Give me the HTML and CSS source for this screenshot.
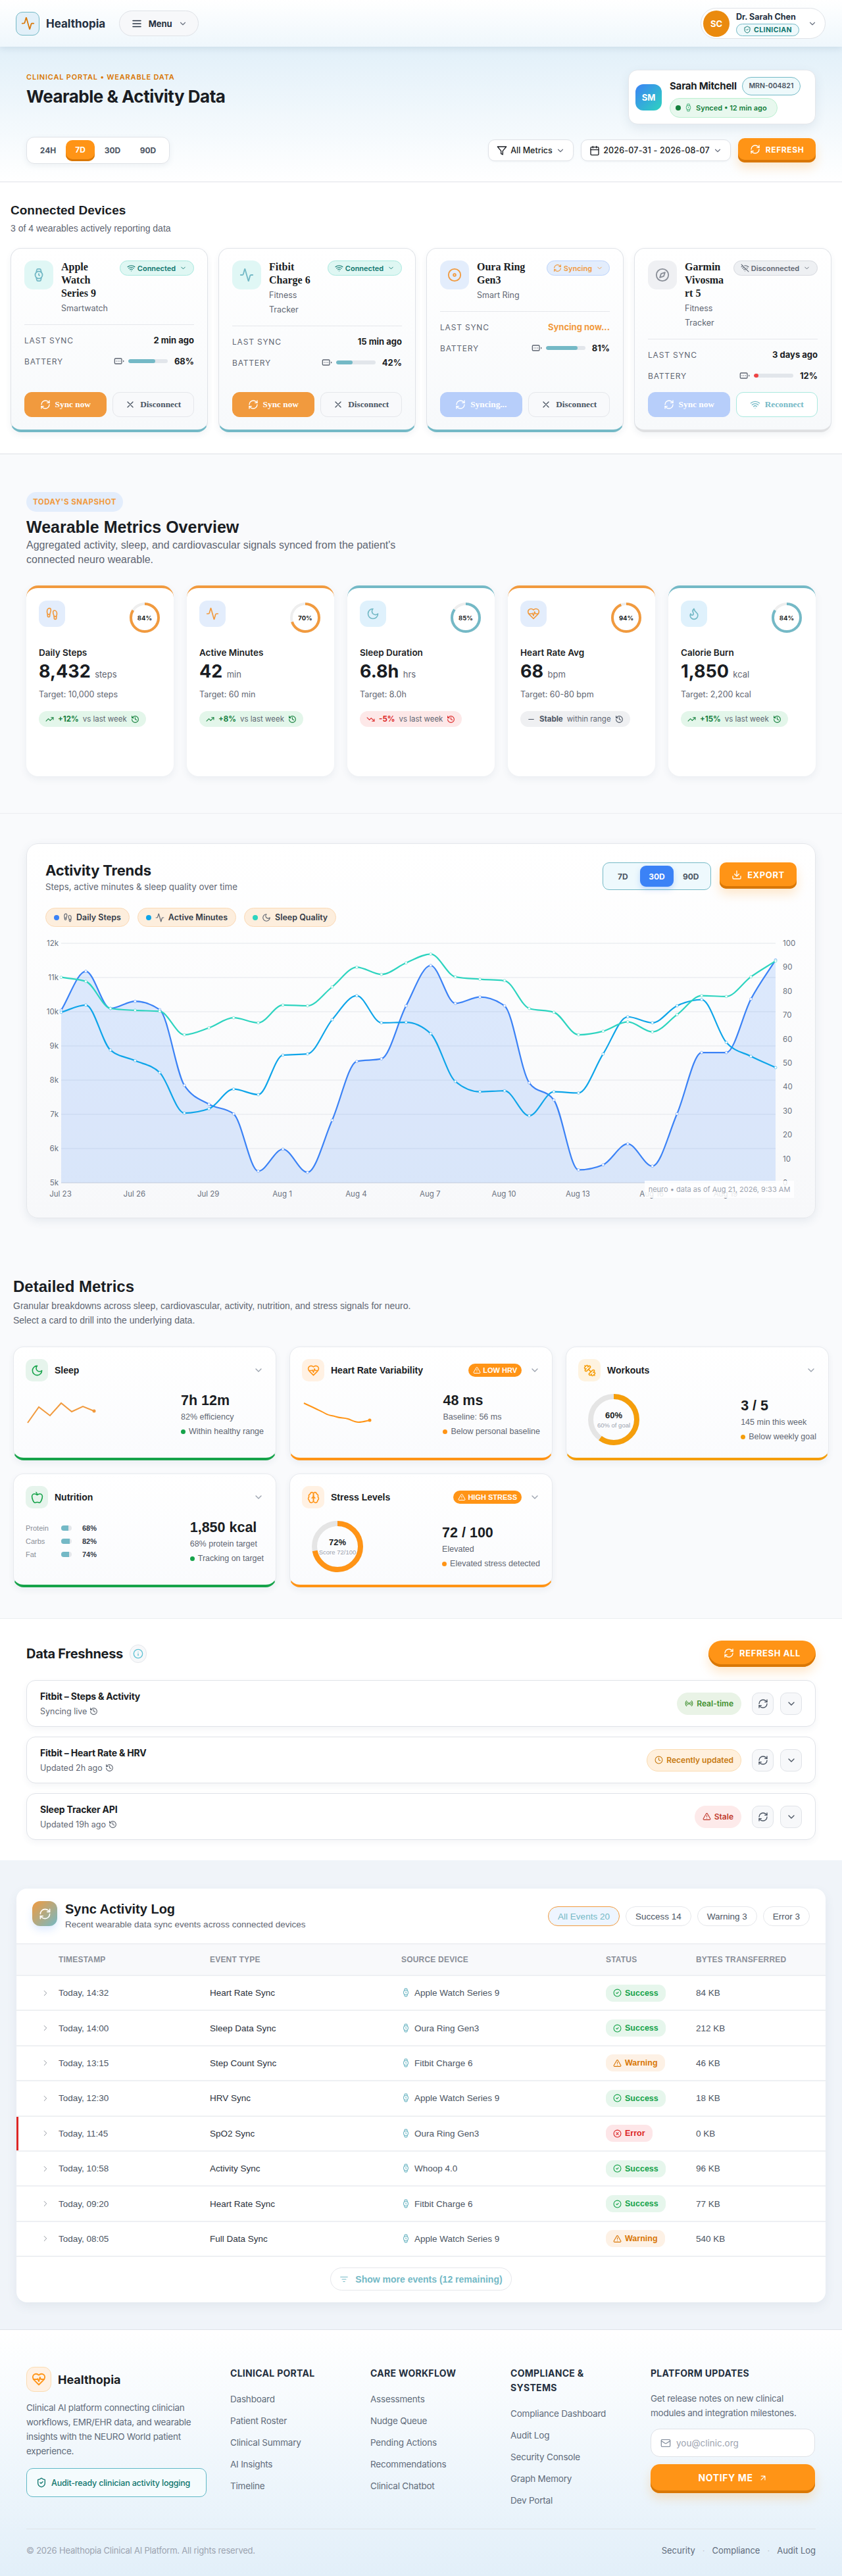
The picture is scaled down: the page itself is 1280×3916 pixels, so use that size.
FILE: index.html
```html
<!DOCTYPE html>
<html lang="en">
<head>
    <meta charset="UTF-8">
    <meta name="viewport" content="width=device-width, initial-scale=1.0">
    <title>Wearable &amp; Activity Data - Healthopia</title>
    <link rel="stylesheet" href="styles.css">
</head>
<body>
    <!-- icon sprite -->
    <svg class="sprite" xmlns="http://www.w3.org/2000/svg">
        <symbol id="i-activity" viewBox="0 0 24 24"><path d="M22 12h-2.48a2 2 0 0 0-1.93 1.46l-2.35 8.36a.25.25 0 0 1-.48 0L9.24 2.18a.25.25 0 0 0-.48 0l-2.35 8.36A2 2 0 0 1 4.49 12H2"/></symbol>
        <symbol id="i-menu" viewBox="0 0 24 24"><path d="M4 6h16M4 12h16M4 18h16"/></symbol>
        <symbol id="i-down" viewBox="0 0 24 24"><path d="m6 9 6 6 6-6"/></symbol>
        <symbol id="i-right" viewBox="0 0 24 24"><path d="m9 18 6-6-6-6"/></symbol>
        <symbol id="i-refresh" viewBox="0 0 24 24"><path d="M3 12a9 9 0 0 1 9-9 9.75 9.75 0 0 1 6.74 2.74L21 8"/><path d="M21 3v5h-5"/><path d="M21 12a9 9 0 0 1-9 9 9.75 9.75 0 0 1-6.74-2.74L3 16"/><path d="M8 16H3v5"/></symbol>
        <symbol id="i-shield" viewBox="0 0 24 24"><path d="M20 13c0 5-3.5 7.5-7.66 8.95a1 1 0 0 1-.67-.01C7.5 20.5 4 18 4 13V6a1 1 0 0 1 1-1c2 0 4.5-1.2 6.24-2.72a1.17 1.17 0 0 1 1.52 0C14.51 3.81 17 5 19 5a1 1 0 0 1 1 1z"/><path d="m9 12 2 2 4-4"/></symbol>
        <symbol id="i-watch" viewBox="0 0 24 24"><circle cx="12" cy="12" r="6"/><path d="M12 10v2l1 1"/><path d="m16.13 7.66-.81-4.05a2 2 0 0 0-2-1.61h-2.68a2 2 0 0 0-2 1.61l-.78 4.05"/><path d="m7.88 16.36.8 4a2 2 0 0 0 2 1.61h2.72a2 2 0 0 0 2-1.61l.81-4.05"/></symbol>
        <symbol id="i-filter" viewBox="0 0 24 24"><path d="M22 3H2l8 9.46V19l4 2v-8.54z"/></symbol>
        <symbol id="i-calendar" viewBox="0 0 24 24"><rect x="3" y="4" width="18" height="18" rx="2"/><path d="M16 2v4M8 2v4M3 10h18"/></symbol>
        <symbol id="i-wifi" viewBox="0 0 24 24"><path d="M12 20h.01"/><path d="M2 8.82a15 15 0 0 1 20 0"/><path d="M5 12.86a10 10 0 0 1 14 0"/><path d="M8.5 16.43a5 5 0 0 1 7 0"/></symbol>
        <symbol id="i-wifi-off" viewBox="0 0 24 24"><path d="M12 20h.01"/><path d="M8.5 16.43a5 5 0 0 1 7 0"/><path d="M5 12.86a10 10 0 0 1 5-2.69"/><path d="M2 8.82a15 15 0 0 1 4.18-2.65"/><path d="M19 12.86a10 10 0 0 0-2.01-1.5"/><path d="M22 8.82a15 15 0 0 0-11.29-3.76"/><path d="m2 2 20 20"/></symbol>
        <symbol id="i-x" viewBox="0 0 24 24"><path d="M18 6 6 18M6 6l12 12"/></symbol>
        <symbol id="i-battery" viewBox="0 0 24 24"><rect x="2" y="6" width="16" height="12" rx="2"/><path d="M22 11v2M6 12h.01M10 12h.01M14 12h.01"/></symbol>
        <symbol id="i-ring" viewBox="0 0 24 24"><circle cx="12" cy="12" r="10"/><circle cx="12" cy="12" r="2"/></symbol>
        <symbol id="i-compass" viewBox="0 0 24 24"><circle cx="12" cy="12" r="10"/><path d="m16.24 7.76-2.12 6.36-6.36 2.12 2.12-6.36z"/></symbol>
        <symbol id="i-steps" viewBox="0 0 24 24"><path d="M4 16v-2.38C4 11.5 2.97 10.5 3 8c.03-2.72 1.49-6 4.5-6C9.37 2 10 3.8 10 5.5c0 3.11-2 5.66-2 8.68V16a2 2 0 1 1-4 0Z"/><path d="M20 20v-2.38c0-2.12 1.03-3.12 1-5.62-.03-2.72-1.49-6-4.5-6C14.63 6 14 7.8 14 9.5c0 3.11 2 5.66 2 8.68V20a2 2 0 1 0 4 0Z"/><path d="M16 17h4M4 13h4"/></symbol>
        <symbol id="i-moon" viewBox="0 0 24 24"><path d="M12 3a6 6 0 0 0 9 9 9 9 0 1 1-9-9Z"/></symbol>
        <symbol id="i-heart" viewBox="0 0 24 24"><path d="M19 14c1.49-1.46 3-3.21 3-5.5A5.5 5.5 0 0 0 16.5 3c-1.76 0-3 .5-4.5 2-1.5-1.5-2.74-2-4.5-2A5.5 5.5 0 0 0 2 8.5c0 2.3 1.5 4.05 3 5.5l7 7Z"/><path d="M3.22 12H9.5l.5-1 2 4.5 2-7 1.5 3.5h5.27"/></symbol>
        <symbol id="i-flame" viewBox="0 0 24 24"><path d="M8.5 14.5A2.5 2.5 0 0 0 11 12c0-1.38-.5-2-1-3-1.07-2.14-.22-4.05 2-6 .5 2.5 2 4.9 4 6.5 2 1.6 3 3.5 3 5.5a7 7 0 1 1-14 0c0-1.15.43-2.29 1-3a2.5 2.5 0 0 0 2.5 2.5z"/></symbol>
        <symbol id="i-up" viewBox="0 0 24 24"><path d="M22 7l-8.5 8.5-5-5L2 17"/><path d="M16 7h6v6"/></symbol>
        <symbol id="i-drop" viewBox="0 0 24 24"><path d="M22 17l-8.5-8.5-5 5L2 7"/><path d="M16 17h6v-6"/></symbol>
        <symbol id="i-minus" viewBox="0 0 24 24"><path d="M5 12h14"/></symbol>
        <symbol id="i-history" viewBox="0 0 24 24"><path d="M3 12a9 9 0 1 0 9-9 9.75 9.75 0 0 0-6.74 2.74L3 8"/><path d="M3 3v5h5"/><path d="M12 7v5l4 2"/></symbol>
        <symbol id="i-download" viewBox="0 0 24 24"><path d="M21 15v4a2 2 0 0 1-2 2H5a2 2 0 0 1-2-2v-4"/><path d="m7 10 5 5 5-5"/><path d="M12 15V3"/></symbol>
        <symbol id="i-dumbbell" viewBox="0 0 24 24"><path d="M14.4 14.4 9.6 9.6"/><path d="M18.66 21.49a2 2 0 1 1-2.83-2.83l-1.77 1.77a2 2 0 1 1-2.83-2.83l6.36-6.36a2 2 0 1 1 2.83 2.83l-1.77 1.77a2 2 0 1 1 2.83 2.83z"/><path d="m21.5 21.5-1.4-1.4M3.9 3.9 2.5 2.5"/><path d="M6.4 12.77a2 2 0 1 1-2.83-2.83l1.77-1.77a2 2 0 1 1-2.83-2.83l2.83-2.83a2 2 0 1 1 2.83 2.83l1.77-1.77a2 2 0 1 1 2.83 2.83z"/></symbol>
        <symbol id="i-apple" viewBox="0 0 24 24"><path d="M12 20.94c1.5 0 2.75 1.06 4 1.06 3 0 6-8 6-12.22A4.91 4.91 0 0 0 17 5c-2.22 0-4 1.44-5 2-1-.56-2.78-2-5-2a4.9 4.9 0 0 0-5 4.78C2 14 5 22 8 22c1.25 0 2.5-1.06 4-1.06Z"/><path d="M10 2c1 .5 2 2 2 5"/></symbol>
        <symbol id="i-brain" viewBox="0 0 24 24"><path d="M12 5a3 3 0 1 0-6 .13 4 4 0 0 0-2.52 5.77 4 4 0 0 0 .55 6.58A4 4 0 1 0 12 18Z"/><path d="M12 5a3 3 0 1 1 6 .13 4 4 0 0 1 2.52 5.77 4 4 0 0 1-.55 6.58A4 4 0 1 1 12 18Z"/><path d="M15 13a4.5 4.5 0 0 1-3-4 4.5 4.5 0 0 1-3 4"/></symbol>
        <symbol id="i-alert" viewBox="0 0 24 24"><path d="m21.73 18-8-14a2 2 0 0 0-3.48 0l-8 14A2 2 0 0 0 4 21h16a2 2 0 0 0 1.73-3"/><path d="M12 9v4M12 17h.01"/></symbol>
        <symbol id="i-clock" viewBox="0 0 24 24"><circle cx="12" cy="12" r="10"/><path d="M12 6v6l4 2"/></symbol>
        <symbol id="i-info" viewBox="0 0 24 24"><circle cx="12" cy="12" r="10"/><path d="M12 16v-4M12 8h.01"/></symbol>
        <symbol id="i-radio" viewBox="0 0 24 24"><path d="M4.9 19.1C1 15.2 1 8.8 4.9 4.9"/><path d="M7.8 16.2c-2.3-2.3-2.3-6.1 0-8.5"/><circle cx="12" cy="12" r="2"/><path d="M16.2 7.8c2.3 2.3 2.3 6.1 0 8.5"/><path d="M19.1 4.9C23 8.8 23 15.1 19.1 19"/></symbol>
        <symbol id="i-check" viewBox="0 0 24 24"><circle cx="12" cy="12" r="10"/><path d="m9 12 2 2 4-4"/></symbol>
        <symbol id="i-error" viewBox="0 0 24 24"><circle cx="12" cy="12" r="10"/><path d="m15 9-6 6M9 9l6 6"/></symbol>
        <symbol id="i-list" viewBox="0 0 24 24"><path d="M3 6h18M7 12h10M10 18h4"/></symbol>
        <symbol id="i-mail" viewBox="0 0 24 24"><rect x="2" y="4" width="20" height="16" rx="2"/><path d="m22 7-8.97 5.7a1.94 1.94 0 0 1-2.06 0L2 7"/></symbol>
        <symbol id="i-arrow" viewBox="0 0 24 24"><path d="M7 7h10v10M7 17 17 7"/></symbol>
    </svg>

    <header class="topbar">
        <div class="topbar-left">
            <div class="logo-box"><svg class="ic"><use href="#i-activity"/></svg></div>
            <span class="logo-name">Healthopia</span>
            <button class="menu-btn"><svg class="ic"><use href="#i-menu"/></svg><span>Menu</span><svg class="ic ic-chev"><use href="#i-down"/></svg></button>
        </div>
        <div class="user-pill">
            <div class="user-avatar">SC</div>
            <div class="user-info">
                <div class="user-name">Dr. Sarah Chen</div>
                <div class="role-badge"><svg class="ic"><use href="#i-shield"/></svg>CLINICIAN</div>
            </div>
            <svg class="ic ic-chev"><use href="#i-down"/></svg>
        </div>
    </header>

    <section class="page-head">
        <div class="page-head-top">
            <div class="page-title">
                <div class="eyebrow">CLINICAL PORTAL • WEARABLE DATA</div>
                <h1>Wearable &amp; Activity Data</h1>
            </div>
            <div class="patient-card">
                <div class="patient-avatar">SM</div>
                <div>
                    <div class="patient-line">
                        <span class="patient-name">Sarah Mitchell</span>
                        <span class="mrn">MRN-004821</span>
                    </div>
                    <div class="synced-pill"><i class="dot"></i><svg class="ic"><use href="#i-watch"/></svg>Synced • 12 min ago</div>
                </div>
            </div>
        </div>
        <div class="controls">
            <div class="time-tabs">
                <button>24H</button>
                <button class="active">7D</button>
                <button>30D</button>
                <button>90D</button>
            </div>
            <div class="controls-right">
                <button class="select-btn select-metrics"><svg class="ic"><use href="#i-filter"/></svg>All Metrics<svg class="ic ic-chev"><use href="#i-down"/></svg></button>
                <button class="select-btn select-date"><svg class="ic"><use href="#i-calendar"/></svg>2026-07-31 - 2026-08-07<svg class="ic ic-chev"><use href="#i-down"/></svg></button>
                <button class="orange-btn refresh-btn"><svg class="ic"><use href="#i-refresh"/></svg>REFRESH</button>
            </div>
        </div>
    </section>

    <section class="devices">
        <h2>Connected Devices</h2>
        <p class="devices-sub">3 of 4 wearables actively reporting data</p>
        <div class="device-grid">
            <div class="device-card">
                <div class="device-head">
                    <div class="device-icon teal"><svg class="ic"><use href="#i-watch"/></svg></div>
                    <div class="device-name">
                        <h3>Apple Watch Series 9</h3>
                        <p>Smartwatch</p>
                    </div>
                    <span class="conn connected"><svg class="ic"><use href="#i-wifi"/></svg>Connected<svg class="ic ic-small"><use href="#i-down"/></svg></span>
                </div>
                <div class="device-row"><span class="row-label">LAST SYNC</span><b>2 min ago</b></div>
                <div class="device-row"><span class="row-label">BATTERY</span><span class="battery"><svg class="ic"><use href="#i-battery"/></svg><span class="track"><i style="width:68%"></i></span><b>68%</b></span></div>
                <div class="device-actions">
                    <button class="dev-btn primary"><svg class="ic"><use href="#i-refresh"/></svg>Sync now</button>
                    <button class="dev-btn"><svg class="ic"><use href="#i-x"/></svg>Disconnect</button>
                </div>
            </div>
            <div class="device-card">
                <div class="device-head">
                    <div class="device-icon teal"><svg class="ic"><use href="#i-activity"/></svg></div>
                    <div class="device-name">
                        <h3>Fitbit Charge 6</h3>
                        <p>Fitness Tracker</p>
                    </div>
                    <span class="conn connected"><svg class="ic"><use href="#i-wifi"/></svg>Connected<svg class="ic ic-small"><use href="#i-down"/></svg></span>
                </div>
                <div class="device-row"><span class="row-label">LAST SYNC</span><b>15 min ago</b></div>
                <div class="device-row"><span class="row-label">BATTERY</span><span class="battery"><svg class="ic"><use href="#i-battery"/></svg><span class="track"><i style="width:42%"></i></span><b>42%</b></span></div>
                <div class="device-actions">
                    <button class="dev-btn primary"><svg class="ic"><use href="#i-refresh"/></svg>Sync now</button>
                    <button class="dev-btn"><svg class="ic"><use href="#i-x"/></svg>Disconnect</button>
                </div>
            </div>
            <div class="device-card">
                <div class="device-head">
                    <div class="device-icon blue"><svg class="ic"><use href="#i-ring"/></svg></div>
                    <div class="device-name">
                        <h3>Oura Ring Gen3</h3>
                        <p>Smart Ring</p>
                    </div>
                    <span class="conn syncing"><svg class="ic"><use href="#i-refresh"/></svg>Syncing<svg class="ic ic-small"><use href="#i-down"/></svg></span>
                </div>
                <div class="device-row"><span class="row-label">LAST SYNC</span><b class="now">Syncing now...</b></div>
                <div class="device-row"><span class="row-label">BATTERY</span><span class="battery"><svg class="ic"><use href="#i-battery"/></svg><span class="track"><i style="width:81%"></i></span><b>81%</b></span></div>
                <div class="device-actions">
                    <button class="dev-btn faded"><svg class="ic"><use href="#i-refresh"/></svg>Syncing...</button>
                    <button class="dev-btn"><svg class="ic"><use href="#i-x"/></svg>Disconnect</button>
                </div>
            </div>
            <div class="device-card off">
                <div class="device-head">
                    <div class="device-icon grey"><svg class="ic"><use href="#i-compass"/></svg></div>
                    <div class="device-name">
                        <h3>Garmin Vivosmart 5</h3>
                        <p>Fitness Tracker</p>
                    </div>
                    <span class="conn disconnected"><svg class="ic"><use href="#i-wifi-off"/></svg>Disconnected<svg class="ic ic-small"><use href="#i-down"/></svg></span>
                </div>
                <div class="device-row"><span class="row-label">LAST SYNC</span><b>3 days ago</b></div>
                <div class="device-row"><span class="row-label">BATTERY</span><span class="battery"><svg class="ic"><use href="#i-battery"/></svg><span class="track"><i class="low" style="width:12%"></i></span><b>12%</b></span></div>
                <div class="device-actions">
                    <button class="dev-btn faded"><svg class="ic"><use href="#i-refresh"/></svg>Sync now</button>
                    <button class="dev-btn reconnect"><svg class="ic"><use href="#i-wifi"/></svg>Reconnect</button>
                </div>
            </div>
        </div>
    </section>

    <section class="overview">
        <span class="snapshot">TODAY'S SNAPSHOT</span>
        <h2>Wearable Metrics Overview</h2>
        <p class="overview-sub">Aggregated activity, sleep, and cardiovascular signals synced from the patient's connected neuro wearable.</p>
        <div class="metric-grid">
            <div class="metric-card c-orange">
                <div class="metric-top">
                    <div class="metric-icon blue"><svg class="ic"><use href="#i-steps"/></svg></div>
                    <div class="ring"><svg viewBox="0 0 46 46"><circle class="ring-bg" cx="23" cy="23" r="21"/><circle class="ring-fg" cx="23" cy="23" r="21" pathLength="100" stroke-dasharray="84 100"/></svg><span>84%</span></div>
                </div>
                <div class="metric-label">Daily Steps</div>
                <div class="metric-value">8,432 <small>steps</small></div>
                <div class="metric-target">Target: 10,000 steps</div>
                <div class="trend up"><svg class="ic"><use href="#i-up"/></svg><b>+12%</b><span>vs last week</span><svg class="ic"><use href="#i-history"/></svg></div>
            </div>
            <div class="metric-card c-orange">
                <div class="metric-top">
                    <div class="metric-icon blue"><svg class="ic"><use href="#i-activity"/></svg></div>
                    <div class="ring"><svg viewBox="0 0 46 46"><circle class="ring-bg" cx="23" cy="23" r="21"/><circle class="ring-fg" cx="23" cy="23" r="21" pathLength="100" stroke-dasharray="70 100"/></svg><span>70%</span></div>
                </div>
                <div class="metric-label">Active Minutes</div>
                <div class="metric-value">42 <small>min</small></div>
                <div class="metric-target">Target: 60 min</div>
                <div class="trend up"><svg class="ic"><use href="#i-up"/></svg><b>+8%</b><span>vs last week</span><svg class="ic"><use href="#i-history"/></svg></div>
            </div>
            <div class="metric-card c-teal">
                <div class="metric-top">
                    <div class="metric-icon sky"><svg class="ic"><use href="#i-moon"/></svg></div>
                    <div class="ring"><svg viewBox="0 0 46 46"><circle class="ring-bg" cx="23" cy="23" r="21"/><circle class="ring-fg" cx="23" cy="23" r="21" pathLength="100" stroke-dasharray="85 100"/></svg><span>85%</span></div>
                </div>
                <div class="metric-label">Sleep Duration</div>
                <div class="metric-value">6.8h <small>hrs</small></div>
                <div class="metric-target">Target: 8.0h</div>
                <div class="trend down"><svg class="ic"><use href="#i-drop"/></svg><b>-5%</b><span>vs last week</span><svg class="ic"><use href="#i-history"/></svg></div>
            </div>
            <div class="metric-card c-orange">
                <div class="metric-top">
                    <div class="metric-icon blue"><svg class="ic"><use href="#i-heart"/></svg></div>
                    <div class="ring"><svg viewBox="0 0 46 46"><circle class="ring-bg" cx="23" cy="23" r="21"/><circle class="ring-fg" cx="23" cy="23" r="21" pathLength="100" stroke-dasharray="94 100"/></svg><span>94%</span></div>
                </div>
                <div class="metric-label">Heart Rate Avg</div>
                <div class="metric-value">68 <small>bpm</small></div>
                <div class="metric-target">Target: 60-80 bpm</div>
                <div class="trend flat"><svg class="ic"><use href="#i-minus"/></svg><b>Stable</b><span>within range</span><svg class="ic"><use href="#i-history"/></svg></div>
            </div>
            <div class="metric-card c-teal">
                <div class="metric-top">
                    <div class="metric-icon sky"><svg class="ic"><use href="#i-flame"/></svg></div>
                    <div class="ring"><svg viewBox="0 0 46 46"><circle class="ring-bg" cx="23" cy="23" r="21"/><circle class="ring-fg" cx="23" cy="23" r="21" pathLength="100" stroke-dasharray="84 100"/></svg><span>84%</span></div>
                </div>
                <div class="metric-label">Calorie Burn</div>
                <div class="metric-value">1,850 <small>kcal</small></div>
                <div class="metric-target">Target: 2,200 kcal</div>
                <div class="trend up"><svg class="ic"><use href="#i-up"/></svg><b>+15%</b><span>vs last week</span><svg class="ic"><use href="#i-history"/></svg></div>
            </div>
        </div>
    </section>

    <section class="trends">
        <div class="chart-card">
            <div class="chart-head">
                <div>
                    <h2>Activity Trends</h2>
                    <p>Steps, active minutes &amp; sleep quality over time</p>
                </div>
                <div class="chart-tools">
                    <div class="range-box">
                        <button>7D</button>
                        <button class="active">30D</button>
                        <button>90D</button>
                    </div>
                    <button class="orange-btn export-btn"><svg class="ic"><use href="#i-download"/></svg>EXPORT</button>
                </div>
            </div>
            <div class="legend">
                <span class="chip"><i class="dot" style="background:#3b82f6"></i><svg class="ic"><use href="#i-steps"/></svg>Daily Steps</span>
                <span class="chip"><i class="dot" style="background:#0ea5e9"></i><svg class="ic"><use href="#i-activity"/></svg>Active Minutes</span>
                <span class="chip"><i class="dot" style="background:#2dd4bf"></i><svg class="ic"><use href="#i-moon"/></svg>Sleep Quality</span>
            </div>
            <div class="chart-wrap">
                <svg id="trend-chart" viewBox="0 0 1142 412"></svg>
                <div class="chart-note">neuro • data as of Aug 21, 2026, 9:33 AM</div>
            </div>
        </div>
    </section>

    <section class="detailed">
        <h2>Detailed Metrics</h2>
        <p class="detailed-sub">Granular breakdowns across sleep, cardiovascular, activity, nutrition, and stress signals for neuro. Select a card to drill into the underlying data.</p>
        <div class="detail-grid">
            <div class="detail-card b-green">
                <div class="detail-head">
                    <div class="detail-icon green"><svg class="ic"><use href="#i-moon"/></svg></div>
                    <h3>Sleep</h3>
                    <svg class="ic ic-chev"><use href="#i-down"/></svg>
                </div>
                <div class="detail-body">
                    <div class="mini-chart">
                        <svg viewBox="0 0 108 36"><polyline points="3,33 20,9 37,22 54,3 70,16 87,8 104,15" fill="none" stroke="#f19a3e" stroke-width="2"/><circle cx="104" cy="15" r="2.5" fill="#f19a3e"/></svg>
                    </div>
                    <div class="detail-text">
                        <div class="detail-value">7h 12m</div>
                        <div class="detail-note">82% efficiency</div>
                        <div class="detail-status"><i class="dot" style="background:#16a34a"></i>Within healthy range</div>
                    </div>
                </div>
            </div>
            <div class="detail-card b-orange">
                <div class="detail-head">
                    <div class="detail-icon orange"><svg class="ic"><use href="#i-heart"/></svg></div>
                    <h3>Heart Rate Variability</h3>
                    <span class="flag"><svg class="ic"><use href="#i-alert"/></svg>LOW HRV</span>
                    <svg class="ic ic-chev"><use href="#i-down"/></svg>
                </div>
                <div class="detail-body">
                    <div class="mini-chart">
                        <svg viewBox="0 0 108 36"><path d="M3 3C9 6 14 8 20 11S31 16 36 19 47 22 53 24 64 25 70 27 80 32 86 32 98 30 103 29" fill="none" stroke="#ff9416" stroke-width="2"/><circle cx="103" cy="29" r="2.5" fill="#ff9416"/></svg>
                    </div>
                    <div class="detail-text">
                        <div class="detail-value">48 ms</div>
                        <div class="detail-note">Baseline: 56 ms</div>
                        <div class="detail-status"><i class="dot" style="background:#ff9416"></i>Below personal baseline</div>
                    </div>
                </div>
            </div>
            <div class="detail-card b-amber">
                <div class="detail-head">
                    <div class="detail-icon amber"><svg class="ic"><use href="#i-dumbbell"/></svg></div>
                    <h3>Workouts</h3>
                    <svg class="ic ic-chev"><use href="#i-down"/></svg>
                </div>
                <div class="detail-body">
                    <div class="donut">
                        <svg viewBox="0 0 78 78"><circle class="donut-bg" cx="39" cy="39" r="35"/><circle class="donut-fg" cx="39" cy="39" r="35" pathLength="100" stroke-dasharray="60 100" stroke="#f59e0b"/></svg>
                        <div class="donut-label"><b>60%</b><span>60% of goal</span></div>
                    </div>
                    <div class="detail-text">
                        <div class="detail-value">3 / 5</div>
                        <div class="detail-note">145 min this week</div>
                        <div class="detail-status"><i class="dot" style="background:#f59e0b"></i>Below weekly goal</div>
                    </div>
                </div>
            </div>
            <div class="detail-card b-green">
                <div class="detail-head">
                    <div class="detail-icon green"><svg class="ic"><use href="#i-apple"/></svg></div>
                    <h3>Nutrition</h3>
                    <svg class="ic ic-chev"><use href="#i-down"/></svg>
                </div>
                <div class="detail-body">
                    <div class="macro-list">
                        <div class="macro"><span>Protein</span><span class="macro-bar"><i style="width:68%"></i></span><b>68%</b></div>
                        <div class="macro"><span>Carbs</span><span class="macro-bar"><i style="width:82%"></i></span><b>82%</b></div>
                        <div class="macro"><span>Fat</span><span class="macro-bar"><i style="width:74%"></i></span><b>74%</b></div>
                    </div>
                    <div class="detail-text">
                        <div class="detail-value">1,850 kcal</div>
                        <div class="detail-note">68% protein target</div>
                        <div class="detail-status"><i class="dot" style="background:#16a34a"></i>Tracking on target</div>
                    </div>
                </div>
            </div>
            <div class="detail-card b-orange">
                <div class="detail-head">
                    <div class="detail-icon orange"><svg class="ic"><use href="#i-brain"/></svg></div>
                    <h3>Stress Levels</h3>
                    <span class="flag"><svg class="ic"><use href="#i-alert"/></svg>HIGH STRESS</span>
                    <svg class="ic ic-chev"><use href="#i-down"/></svg>
                </div>
                <div class="detail-body">
                    <div class="donut">
                        <svg viewBox="0 0 78 78"><circle class="donut-bg" cx="39" cy="39" r="35"/><circle class="donut-fg" cx="39" cy="39" r="35" pathLength="100" stroke-dasharray="72 100" stroke="#ff9416"/></svg>
                        <div class="donut-label"><b>72%</b><span>Score 72/100</span></div>
                    </div>
                    <div class="detail-text">
                        <div class="detail-value">72 / 100</div>
                        <div class="detail-note">Elevated</div>
                        <div class="detail-status"><i class="dot" style="background:#ff9416"></i>Elevated stress detected</div>
                    </div>
                </div>
            </div>
        </div>
    </section>

    <section class="freshness">
        <div class="fresh-head">
            <div class="fresh-title">
                <h2>Data Freshness</h2>
                <span class="info-btn"><svg class="ic"><use href="#i-info"/></svg></span>
            </div>
            <button class="orange-btn refresh-all"><svg class="ic"><use href="#i-refresh"/></svg>REFRESH ALL</button>
        </div>
        <div class="fresh-row">
            <div class="fresh-info">
                <h3>Fitbit – Steps &amp; Activity</h3>
                <p>Syncing live <svg class="ic"><use href="#i-history"/></svg></p>
            </div>
            <span class="fresh-badge live"><svg class="ic"><use href="#i-radio"/></svg>Real-time</span>
            <button class="square-btn"><svg class="ic"><use href="#i-refresh"/></svg></button>
            <button class="square-btn"><svg class="ic"><use href="#i-down"/></svg></button>
        </div>
        <div class="fresh-row">
            <div class="fresh-info">
                <h3>Fitbit – Heart Rate &amp; HRV</h3>
                <p>Updated 2h ago <svg class="ic"><use href="#i-history"/></svg></p>
            </div>
            <span class="fresh-badge recent"><svg class="ic"><use href="#i-clock"/></svg>Recently updated</span>
            <button class="square-btn"><svg class="ic"><use href="#i-refresh"/></svg></button>
            <button class="square-btn"><svg class="ic"><use href="#i-down"/></svg></button>
        </div>
        <div class="fresh-row">
            <div class="fresh-info">
                <h3>Sleep Tracker API</h3>
                <p>Updated 19h ago <svg class="ic"><use href="#i-history"/></svg></p>
            </div>
            <span class="fresh-badge stale"><svg class="ic"><use href="#i-alert"/></svg>Stale</span>
            <button class="square-btn"><svg class="ic"><use href="#i-refresh"/></svg></button>
            <button class="square-btn"><svg class="ic"><use href="#i-down"/></svg></button>
        </div>
    </section>

    <section class="sync-log">
        <div class="log-card">
            <div class="log-head">
                <div class="log-icon"><svg class="ic"><use href="#i-refresh"/></svg></div>
                <div class="log-title">
                    <h2>Sync Activity Log</h2>
                    <p>Recent wearable data sync events across connected devices</p>
                </div>
                <div class="log-filters">
                    <button class="active">All Events 20</button>
                    <button>Success 14</button>
                    <button>Warning 3</button>
                    <button>Error 3</button>
                </div>
            </div>
            <table class="log-table">
                <thead>
                    <tr><th></th><th>TIMESTAMP</th><th>EVENT TYPE</th><th>SOURCE DEVICE</th><th>STATUS</th><th>BYTES TRANSFERRED</th></tr>
                </thead>
                <tbody>
                    <tr><td class="exp"><svg class="ic"><use href="#i-right"/></svg></td><td class="muted">Today, 14:32</td><td>Heart Rate Sync</td><td class="muted"><svg class="ic src"><use href="#i-watch"/></svg>Apple Watch Series 9</td><td><span class="st ok"><svg class="ic"><use href="#i-check"/></svg>Success</span></td><td class="muted">84 KB</td></tr>
                    <tr><td class="exp"><svg class="ic"><use href="#i-right"/></svg></td><td class="muted">Today, 14:00</td><td>Sleep Data Sync</td><td class="muted"><svg class="ic src"><use href="#i-watch"/></svg>Oura Ring Gen3</td><td><span class="st ok"><svg class="ic"><use href="#i-check"/></svg>Success</span></td><td class="muted">212 KB</td></tr>
                    <tr><td class="exp"><svg class="ic"><use href="#i-right"/></svg></td><td class="muted">Today, 13:15</td><td>Step Count Sync</td><td class="muted"><svg class="ic src"><use href="#i-watch"/></svg>Fitbit Charge 6</td><td><span class="st warn"><svg class="ic"><use href="#i-alert"/></svg>Warning</span></td><td class="muted">46 KB</td></tr>
                    <tr><td class="exp"><svg class="ic"><use href="#i-right"/></svg></td><td class="muted">Today, 12:30</td><td>HRV Sync</td><td class="muted"><svg class="ic src"><use href="#i-watch"/></svg>Apple Watch Series 9</td><td><span class="st ok"><svg class="ic"><use href="#i-check"/></svg>Success</span></td><td class="muted">18 KB</td></tr>
                    <tr class="row-error"><td class="exp"><svg class="ic"><use href="#i-right"/></svg></td><td class="muted">Today, 11:45</td><td>SpO2 Sync</td><td class="muted"><svg class="ic src"><use href="#i-watch"/></svg>Oura Ring Gen3</td><td><span class="st err"><svg class="ic"><use href="#i-error"/></svg>Error</span></td><td class="muted">0 KB</td></tr>
                    <tr><td class="exp"><svg class="ic"><use href="#i-right"/></svg></td><td class="muted">Today, 10:58</td><td>Activity Sync</td><td class="muted"><svg class="ic src"><use href="#i-watch"/></svg>Whoop 4.0</td><td><span class="st ok"><svg class="ic"><use href="#i-check"/></svg>Success</span></td><td class="muted">96 KB</td></tr>
                    <tr><td class="exp"><svg class="ic"><use href="#i-right"/></svg></td><td class="muted">Today, 09:20</td><td>Heart Rate Sync</td><td class="muted"><svg class="ic src"><use href="#i-watch"/></svg>Fitbit Charge 6</td><td><span class="st ok"><svg class="ic"><use href="#i-check"/></svg>Success</span></td><td class="muted">77 KB</td></tr>
                    <tr><td class="exp"><svg class="ic"><use href="#i-right"/></svg></td><td class="muted">Today, 08:05</td><td>Full Data Sync</td><td class="muted"><svg class="ic src"><use href="#i-watch"/></svg>Apple Watch Series 9</td><td><span class="st warn"><svg class="ic"><use href="#i-alert"/></svg>Warning</span></td><td class="muted">540 KB</td></tr>
                </tbody>
            </table>
            <div class="log-more">
                <button><svg class="ic"><use href="#i-list"/></svg>Show more events (12 remaining)</button>
            </div>
        </div>
    </section>

    <footer class="footer">
        <div class="footer-grid">
            <div class="footer-brand">
                <div class="footer-logo">
                    <div class="footer-icon"><svg class="ic"><use href="#i-heart"/></svg></div>
                    <span>Healthopia</span>
                </div>
                <p>Clinical AI platform connecting clinician workflows, EMR/EHR data, and wearable insights with the NEURO World patient experience.</p>
                <div class="audit-badge"><svg class="ic"><use href="#i-shield"/></svg>Audit-ready clinician activity logging</div>
            </div>
            <div class="footer-col">
                <h4>CLINICAL PORTAL</h4>
                <a>Dashboard</a><a>Patient Roster</a><a>Clinical Summary</a><a>AI Insights</a><a>Timeline</a>
            </div>
            <div class="footer-col">
                <h4>CARE WORKFLOW</h4>
                <a>Assessments</a><a>Nudge Queue</a><a>Pending Actions</a><a>Recommendations</a><a>Clinical Chatbot</a>
            </div>
            <div class="footer-col">
                <h4>COMPLIANCE &amp; SYSTEMS</h4>
                <a>Compliance Dashboard</a><a>Audit Log</a><a>Security Console</a><a>Graph Memory</a><a>Dev Portal</a>
            </div>
            <div class="footer-updates">
                <h4>PLATFORM UPDATES</h4>
                <p>Get release notes on new clinical modules and integration milestones.</p>
                <div class="email-box"><svg class="ic"><use href="#i-mail"/></svg><span>you@clinic.org</span></div>
                <button class="orange-btn notify-btn">NOTIFY ME<svg class="ic"><use href="#i-arrow"/></svg></button>
            </div>
        </div>
        <div class="footer-bottom">
            <span class="copyright">© 2026 Healthopia Clinical AI Platform. All rights reserved.</span>
            <div class="footer-links"><a>Security</a><i>·</i><a>Compliance</a><i>·</i><a>Audit Log</a></div>
        </div>
    </footer>

    <script src="script.js"></script>
</body>
</html>
```
FILE: styles.css
```css
* {
    box-sizing: border-box;
}

body {
    margin: 0;
    font-family: Inter, "Noto Sans", sans-serif;
    background-color: #f9fafc;
    color: #1a1d23;
}

button {
    font-family: inherit;
    cursor: pointer;
}

h1, h2, h3, h4, p {
    margin: 0;
}

.sprite {
    display: none;
}

.ic {
    width: 16px;
    height: 16px;
    flex: none;
    fill: none;
    stroke: currentColor;
    stroke-width: 2;
    stroke-linecap: round;
    stroke-linejoin: round;
}

.ic-chev {
    color: #6b7280;
    width: 14px;
    height: 14px;
}

.dot {
    display: inline-block;
    width: 8px;
    height: 8px;
    border-radius: 50%;
    flex: none;
}

/* top bar */
.topbar {
    position: relative;
    z-index: 2;
    height: 71px;
    display: flex;
    align-items: center;
    justify-content: space-between;
    padding: 0 25px 0 24px;
    background: linear-gradient(180deg, #ffffff, #eff7fc);
    box-shadow: 0 2px 10px rgba(60, 90, 120, 0.14);
}

.topbar-left {
    display: flex;
    align-items: center;
}

.logo-box {
    width: 36px;
    height: 36px;
    border: 1px solid #74b9c6;
    border-radius: 10px;
    background: #e2f0f9;
    color: #d97706;
    display: flex;
    align-items: center;
    justify-content: center;
}

.logo-box .ic {
    width: 21px;
    height: 21px;
}

.logo-name {
    margin-left: 10px;
    font-size: 17px;
    font-weight: 700;
    color: #243040;
}

.menu-btn {
    margin-left: 21px;
    height: 39px;
    width: 121px;
    display: flex;
    align-items: center;
    justify-content: center;
    gap: 9px;
    border: 1px solid #dfe2e7;
    border-radius: 20px;
    background: #f7f8fa;
    font-size: 13px;
    font-weight: 700;
    color: #243040;
}

.menu-btn .ic:first-child {
    width: 18px;
    height: 18px;
}

.user-pill {
    width: 190px;
    height: 47px;
    display: flex;
    align-items: center;
    padding: 0 12px 0 3px;
    border: 1px solid #dfe2e7;
    border-radius: 24px;
    background: #fff;
}

.user-avatar {
    width: 40px;
    height: 40px;
    border-radius: 50%;
    background: #ea8a0e;
    color: #fff;
    font-size: 13px;
    font-weight: 700;
    display: flex;
    align-items: center;
    justify-content: center;
}

.user-info {
    margin-left: 10px;
    flex: 1;
}

.user-name {
    font-size: 12.5px;
    font-weight: 700;
    line-height: 17px;
    color: #243040;
}

.role-badge {
    width: 96px;
    height: 19px;
    margin-top: 2px;
    display: flex;
    align-items: center;
    justify-content: center;
    gap: 4px;
    border: 1px solid #74b9c6;
    border-radius: 10px;
    background: #eef9fb;
    color: #0f766e;
    font-size: 10.5px;
    font-weight: 700;
    letter-spacing: 0.4px;
}

.role-badge .ic {
    width: 12px;
    height: 12px;
}

/* page header */
.page-head {
    height: 206px;
    padding: 35px 40px 0;
    background: linear-gradient(180deg, #e2f0f9, #ffffff);
    border-bottom: 1px solid #dfe2e7;
}

.page-head-top {
    display: flex;
    justify-content: space-between;
    align-items: flex-start;
}

.page-title {
    padding-top: 4px;
}

.eyebrow {
    font-size: 11px;
    line-height: 14px;
    font-weight: 600;
    letter-spacing: 0.8px;
    color: #d97706;
}

h1 {
    margin-top: 5px;
    font-size: 26px;
    line-height: 36px;
    font-weight: 700;
    letter-spacing: -0.5px;
    color: #1a1d23;
}

.patient-card {
    width: 285px;
    height: 83px;
    display: flex;
    align-items: center;
    gap: 12px;
    padding: 0 10px;
    border: 1px solid #e5e7eb;
    border-radius: 14px;
    background: #fff;
    box-shadow: 0 6px 16px rgba(60, 90, 120, 0.1);
}

.patient-avatar {
    width: 40px;
    height: 40px;
    border-radius: 12px;
    background: linear-gradient(135deg, #3b82f6, #2dd4bf);
    color: #fff;
    font-size: 13px;
    font-weight: 700;
    display: flex;
    align-items: center;
    justify-content: center;
    flex: none;
}

.patient-line {
    display: flex;
    align-items: center;
    gap: 8px;
}

.patient-name {
    font-size: 15px;
    font-weight: 700;
    white-space: nowrap;
    letter-spacing: -0.2px;
}

.mrn {
    width: 89px;
    height: 28px;
    display: flex;
    align-items: center;
    justify-content: center;
    border: 1px solid #74b9c6;
    border-radius: 14px;
    background: #eef9fb;
    font-size: 10.5px;
    font-weight: 600;
    color: #4b5563;
}

.synced-pill {
    width: 164px;
    height: 30px;
    margin-top: 4px;
    display: flex;
    align-items: center;
    padding-left: 8px;
    gap: 5px;
    border: 1px solid #bbf0d0;
    border-radius: 15px;
    background: #e8f8ee;
    font-size: 11px;
    font-weight: 600;
    color: #15803d;
}

.synced-pill .dot {
    background: #15803d;
}

.synced-pill .ic {
    width: 13px;
    height: 13px;
    color: #5db98a;
}

.controls {
    margin-top: 19px;
    display: flex;
    justify-content: space-between;
    align-items: center;
}

.time-tabs {
    width: 218px;
    height: 41px;
    display: flex;
    align-items: center;
    padding: 0 5px;
    border: 1px solid #e0e3e8;
    border-radius: 12px;
    background: #fff;
    box-shadow: 0 3px 8px rgba(60, 90, 120, 0.08);
}

.time-tabs button {
    flex: 1;
    height: 32px;
    border: 0;
    border-radius: 10px;
    background: none;
    font-size: 12px;
    font-weight: 700;
    color: #4b5563;
}

.time-tabs button.active {
    flex: none;
    width: 44px;
    background: #ff9416;
    color: #fff;
    box-shadow: inset 0 -3px 0 #d97706;
    padding-bottom: 4px;
}

.controls-right {
    display: flex;
    align-items: center;
    gap: 11px;
}

.select-btn {
    height: 33px;
    display: flex;
    align-items: center;
    justify-content: space-between;
    padding: 0 12px;
    border: 1px solid #e0e3e8;
    border-radius: 10px;
    background: #fff;
    font-size: 12.5px;
    font-weight: 500;
    color: #1a1d23;
    box-shadow: 0 1px 3px rgba(60, 90, 120, 0.06);
}

.select-metrics {
    width: 130px;
}

.select-date {
    width: 228px;
    letter-spacing: 0.2px;
}

.orange-btn {
    border: 0;
    background: #ff9416;
    color: #fff;
    font-weight: 700;
    letter-spacing: 0.6px;
    display: flex;
    align-items: center;
    justify-content: center;
    gap: 8px;
    padding-bottom: 4px;
    box-shadow: inset 0 -4px 0 #d97706, 0 8px 16px rgba(255, 148, 22, 0.22);
}

.refresh-btn {
    width: 118px;
    height: 37px;
    border-radius: 10px;
    font-size: 12px;
}

/* connected devices */
.devices {
    padding: 31px 16px 32px;
    background: #fff;
    border-bottom: 2px solid #eceef1;
}

.devices h2 {
    font-family: "Liberation Sans", sans-serif;
    font-size: 19px;
    line-height: 24px;
    font-weight: 700;
}

.devices-sub {
    margin-top: 5px;
    font-family: "Liberation Sans", sans-serif;
    font-size: 14px;
    line-height: 20px;
    color: #5f6672;
}

.device-grid {
    margin-top: 20px;
    display: grid;
    grid-template-columns: repeat(4, 1fr);
    gap: 16px;
}

.device-card {
    display: flex;
    flex-direction: column;
    padding: 18px 20px 19px;
    border: 1px solid #e0e3e8;
    border-bottom: 4px solid #74b9c6;
    border-radius: 16px;
    background: linear-gradient(180deg, #ffffff, #f7f9fb);
    box-shadow: 0 4px 10px rgba(60, 90, 120, 0.07);
}

.device-card.off {
    border-bottom-color: #dfe0e2;
}

.device-head {
    display: flex;
    align-items: flex-start;
    padding-bottom: 13px;
    margin-bottom: 13px;
    border-bottom: 1px solid #e5e7eb;
}

.device-icon {
    width: 44px;
    height: 44px;
    border-radius: 13px;
    display: flex;
    align-items: center;
    justify-content: center;
    flex: none;
}

.device-icon .ic {
    width: 22px;
    height: 22px;
}

.device-icon.teal {
    background: #e0f7f5;
    color: #74b9c6;
}

.device-icon.blue {
    background: #e3edfc;
    color: #f19a3e;
}

.device-icon.grey {
    background: #eff0f3;
    color: #8a8f98;
}

.device-name {
    flex: 1;
    min-width: 0;
    padding: 0 10px 0 12px;
}

.device-name h3 {
    font-family: "Liberation Serif", serif;
    font-size: 16px;
    line-height: 20px;
    font-weight: 700;
    overflow-wrap: anywhere;
}

.device-name p {
    margin-top: 2px;
    font-size: 12.5px;
    line-height: 22px;
    color: #5f6672;
}

.conn {
    height: 23px;
    display: flex;
    align-items: center;
    justify-content: center;
    gap: 3px;
    border: 1px solid transparent;
    border-radius: 12px;
    font-size: 11px;
    font-weight: 600;
    white-space: nowrap;
    flex: none;
}

.conn .ic {
    width: 13px;
    height: 13px;
}

.conn .ic-small {
    width: 11px;
    height: 11px;
    margin-left: 3px;
}

.conn.connected {
    width: 113px;
    background: #dff7f3;
    border-color: #a9e9df;
    color: #0f766e;
}

.conn.syncing {
    width: 96px;
    background: #e3edfc;
    border-color: #bcd3fb;
    color: #f19a3e;
}

.conn.disconnected {
    width: 128px;
    background: #eef0f3;
    border-color: #d6d9df;
    color: #5f6672;
}

.device-row {
    display: flex;
    justify-content: space-between;
    align-items: center;
    height: 20px;
    margin-bottom: 12px;
    font-size: 13px;
}

.row-label {
    font-size: 12px;
    letter-spacing: 0.8px;
    color: #5f6672;
}

.now {
    color: #f19a3e;
}

.battery {
    display: flex;
    align-items: center;
    gap: 6px;
}

.battery .ic {
    color: #5f6672;
}

.battery b {
    margin-left: 4px;
}

.track {
    width: 60px;
    height: 6px;
    border-radius: 3px;
    background: #e2e6eb;
    overflow: hidden;
}

.track i {
    display: block;
    height: 100%;
    border-radius: 3px;
    background: #74b9c6;
}

.track i.low {
    background: #ef4444;
}

.device-actions {
    margin-top: auto;
    padding-top: 3px;
    display: grid;
    grid-template-columns: 1fr 1fr;
    gap: 9px;
}

.dev-btn {
    height: 38px;
    display: flex;
    align-items: center;
    justify-content: center;
    gap: 7px;
    border: 1px solid #e5e7eb;
    border-radius: 11px;
    background: #f8f9fb;
    font-family: "Liberation Serif", serif;
    font-size: 13.3px;
    font-weight: 700;
    color: #4b5563;
}

.dev-btn.primary {
    background: #f19a3e;
    border-color: #f19a3e;
    color: #fff;
}

.dev-btn.faded {
    background: #b7cefa;
    border-color: #b7cefa;
    color: #fff;
}

.dev-btn.reconnect {
    background: #fff;
    border-color: #a9e9df;
    color: #74b9c6;
}

/* overview */
.overview {
    padding: 57px 40px 56px;
    border-bottom: 1px solid #eceef1;
}

.snapshot {
    display: inline-flex;
    align-items: center;
    height: 30px;
    padding: 0 10px;
    border-radius: 15px;
    background: #e3edfc;
    color: #f19a3e;
    font-size: 11.5px;
    font-weight: 700;
    letter-spacing: 0.5px;
}

.overview h2 {
    margin-top: 7px;
    font-family: "Liberation Sans", sans-serif;
    font-size: 25px;
    line-height: 32px;
    font-weight: 700;
}

.overview-sub {
    margin-top: 1px;
    max-width: 580px;
    font-family: "Liberation Sans", sans-serif;
    font-size: 16px;
    line-height: 22px;
    color: #5f6672;
}

.metric-grid {
    margin-top: 28px;
    display: grid;
    grid-template-columns: repeat(5, 1fr);
    gap: 20px;
}

.metric-card {
    height: 290px;
    padding: 19px 21px 0 19px;
    border-top: 4px solid;
    border-radius: 18px;
    background: #fff;
    box-shadow: 0 4px 12px rgba(60, 90, 120, 0.08);
}

.c-orange {
    border-top-color: #f19a3e;
    --accent: #f19a3e;
}

.c-teal {
    border-top-color: #74b9c6;
    --accent: #74b9c6;
}

.metric-top {
    display: flex;
    justify-content: space-between;
    align-items: flex-start;
}

.metric-icon {
    width: 40px;
    height: 40px;
    border-radius: 12px;
    display: flex;
    align-items: center;
    justify-content: center;
    color: var(--accent);
}

.metric-icon .ic {
    width: 20px;
    height: 20px;
}

.metric-icon.blue {
    background: #e3edfc;
}

.metric-icon.sky {
    background: #dff1fc;
}

.ring {
    position: relative;
    width: 46px;
    height: 46px;
    margin-top: 3px;
}

.ring svg {
    display: block;
    transform: rotate(-90deg);
}

.ring circle {
    fill: none;
    stroke-width: 4;
}

.ring-bg {
    stroke: #eeeeee;
}

.ring-fg {
    stroke: var(--accent);
}

.ring span {
    position: absolute;
    inset: 0;
    display: flex;
    align-items: center;
    justify-content: center;
    font-size: 9.5px;
    font-weight: 700;
}

.metric-label {
    margin-top: 20px;
    font-size: 13.5px;
    line-height: 20px;
    font-weight: 600;
}

.metric-value {
    font-size: 27px;
    line-height: 36px;
    font-weight: 700;
    margin-top: 1px;
}

.metric-value small {
    font-size: 13px;
    font-weight: 400;
    color: #5f6672;
}

.metric-target {
    margin-top: 4px;
    font-size: 12.5px;
    line-height: 18px;
    color: #5f6672;
}

.trend {
    display: inline-flex;
    align-items: center;
    height: 24px;
    margin-top: 16px;
    padding: 0 10px;
    gap: 6px;
    border-radius: 12px;
    font-size: 11.5px;
    white-space: nowrap;
}

.trend span {
    color: #5f6672;
}

.trend .ic {
    width: 13px;
    height: 13px;
}

.trend.up {
    background: #e3f6ea;
    color: #15803d;
}

.trend.down {
    background: #fde8e8;
    color: #dc2626;
}

.trend.flat {
    background: #eff0f2;
    color: #4b5563;
}

/* activity trends */
.trends {
    padding: 45px 40px 48px;
}

.chart-card {
    padding: 28px 28px 22px;
    height: 570px;
    border: 1px solid #e5e7eb;
    border-radius: 18px;
    background: linear-gradient(180deg, #ffffff, #f7f8fa);
    box-shadow: 0 4px 14px rgba(60, 90, 120, 0.1);
}

.chart-head {
    display: flex;
    justify-content: space-between;
    align-items: flex-start;
}

.chart-head h2 {
    font-size: 22px;
    line-height: 26px;
    font-weight: 700;
    letter-spacing: -0.2px;
    margin-top: -1px;
}

.chart-head p {
    margin-top: 2px;
    font-size: 13.3px;
    line-height: 20px;
    color: #5f6672;
}

.chart-tools {
    display: flex;
    gap: 13px;
    align-items: flex-start;
}

.range-box {
    width: 165px;
    height: 42px;
    display: flex;
    align-items: center;
    padding: 0 4px;
    border: 1px solid #74b9c6;
    border-radius: 10px;
    background: #eef9fd;
}

.range-box button {
    flex: 1;
    height: 32px;
    border: 0;
    border-radius: 9px;
    background: none;
    font-size: 12px;
    font-weight: 700;
    color: #4b5563;
}

.range-box button.active {
    background: #3b82f6;
    color: #fff;
    box-shadow: 0 4px 8px rgba(59, 130, 246, 0.25);
}

.export-btn {
    width: 117px;
    height: 40px;
    border-radius: 10px;
    font-size: 13px;
}

.legend {
    margin-top: 22px;
    display: flex;
    gap: 12px;
}

.chip {
    height: 29px;
    display: inline-flex;
    align-items: center;
    gap: 6px;
    padding: 0 12px;
    border: 1px solid #fbd9b5;
    border-radius: 15px;
    background: #fdeedd;
    font-size: 12.5px;
    font-weight: 600;
    color: #333b47;
}

.chip .ic {
    width: 14px;
    height: 14px;
    color: #5f6672;
}

.chart-wrap {
    position: relative;
    margin-top: 12px;
}

#trend-chart {
    display: block;
    width: 1142px;
    height: 412px;
}

#trend-chart text {
    font-family: Inter, sans-serif;
    font-size: 11.5px;
    fill: #6b7280;
}

.chart-note {
    position: absolute;
    right: 4px;
    top: 374px;
    width: 227px;
    height: 26px;
    display: flex;
    align-items: center;
    justify-content: center;
    background: rgba(255, 255, 255, 0.85);
    font-size: 11px;
    color: #9ca3af;
    white-space: nowrap;
}

/* detailed metrics */
.detailed {
    padding: 42px 20px 47px;
    border-bottom: 1px solid #eceef1;
}

.detailed h2 {
    font-family: "Liberation Sans", sans-serif;
    font-size: 24px;
    line-height: 28px;
    font-weight: 700;
}

.detailed-sub {
    margin-top: 4px;
    max-width: 640px;
    font-family: "Liberation Sans", sans-serif;
    font-size: 14px;
    line-height: 22px;
    color: #5f6672;
}

.detail-grid {
    margin-top: 29px;
    display: grid;
    grid-template-columns: repeat(3, 1fr);
    gap: 20px;
}

.detail-card {
    padding: 18px 18px 14px;
    border: 1px solid #e8eaee;
    border-bottom: 4px solid;
    border-radius: 16px;
    background: linear-gradient(180deg, #ffffff, #fafbfd);
    box-shadow: 0 4px 10px rgba(60, 90, 120, 0.07);
    font-family: "Liberation Sans", sans-serif;
}

.b-green {
    border-bottom-color: #16a34a;
}

.b-orange {
    border-bottom-color: #ff9416;
}

.b-amber {
    border-bottom-color: #f59e0b;
}

.detail-head {
    display: flex;
    align-items: center;
    height: 34px;
}

.detail-head h3 {
    margin-left: 10px;
    flex: 1;
    font-size: 14px;
    font-weight: 700;
}

.detail-head .ic-chev {
    margin-left: 12px;
    width: 16px;
    height: 16px;
    color: #9ca3af;
}

.detail-icon {
    width: 34px;
    height: 34px;
    border-radius: 10px;
    display: flex;
    align-items: center;
    justify-content: center;
    flex: none;
}

.detail-icon .ic {
    width: 19px;
    height: 19px;
}

.detail-icon.green {
    background: #e6f4ec;
    color: #16a34a;
}

.detail-icon.orange {
    background: #fff1e3;
    color: #ff9416;
}

.detail-icon.amber {
    background: #fef3e0;
    color: #f59e0b;
}

.flag {
    height: 20px;
    display: flex;
    align-items: center;
    gap: 3px;
    padding: 0 7px;
    border-radius: 10px;
    background: #ff9416;
    color: #fff;
    font-size: 11px;
    font-weight: 700;
}

.flag .ic {
    width: 12px;
    height: 12px;
}

.detail-body {
    margin-top: 14px;
    display: flex;
    align-items: center;
    justify-content: space-between;
}

.mini-chart {
    width: 108px;
    height: 36px;
    margin-top: -5px;
}

.mini-chart svg {
    display: block;
    width: 108px;
    height: 36px;
}

.donut {
    position: relative;
    width: 108px;
    height: 88px;
    display: flex;
    align-items: center;
    justify-content: center;
}

.donut svg {
    width: 78px;
    height: 78px;
    transform: rotate(-90deg);
}

.donut circle {
    fill: none;
    stroke-width: 8;
}

.donut-bg {
    stroke: #e5e5e5;
}

.donut-label {
    position: absolute;
    inset: 0;
    display: flex;
    flex-direction: column;
    align-items: center;
    justify-content: center;
}

.donut-label b {
    font-size: 13px;
    line-height: 16px;
}

.donut-label span {
    font-size: 9.5px;
    line-height: 13px;
    color: #9ca3af;
}

.macro-list {
    width: 120px;
    margin-top: -1px;
}

.macro {
    display: flex;
    align-items: center;
    height: 20px;
    font-size: 11px;
    color: #8a8f98;
}

.macro span:first-child {
    width: 54px;
}

.macro b {
    margin-left: 16px;
    color: #333b47;
}

.macro-bar {
    width: 16px;
    height: 8px;
    border-radius: 4px;
    background: #e5e7eb;
    overflow: hidden;
}

.macro-bar i {
    display: block;
    height: 100%;
    background: #74b9c6;
}

.detail-value {
    font-size: 21.5px;
    line-height: 30px;
    font-weight: 700;
}

.detail-note {
    font-size: 12.5px;
    line-height: 20px;
    color: #5f6672;
}

.detail-status {
    display: flex;
    align-items: center;
    gap: 5px;
    font-size: 12.5px;
    line-height: 20px;
    margin-top: 2px;
    color: #5f6672;
    white-space: nowrap;
}

.detail-status .dot {
    width: 7px;
    height: 7px;
}

/* data freshness */
.freshness {
    padding: 33px 40px 31px;
    background: #fff;
}

.fresh-head {
    height: 40px;
    margin-bottom: 20px;
    display: flex;
    justify-content: space-between;
    align-items: center;
}

.fresh-title {
    display: flex;
    align-items: center;
    gap: 10px;
}

.fresh-title h2 {
    font-size: 20px;
    font-weight: 700;
    letter-spacing: -0.3px;
}

.info-btn {
    width: 26px;
    height: 28px;
    display: flex;
    align-items: center;
    justify-content: center;
    border: 1px solid #e5e7eb;
    border-radius: 13px;
    background: #f7f8fa;
    color: #5fc2d3;
}

.refresh-all {
    width: 163px;
    height: 40px;
    border-radius: 20px;
    font-size: 13px;
}

.fresh-row {
    height: 71px;
    margin-bottom: 15px;
    display: flex;
    align-items: center;
    gap: 10px;
    padding: 0 20px;
    border: 1px solid #e0e3e8;
    border-radius: 14px;
    background: #fff;
    box-shadow: 0 4px 10px rgba(60, 90, 120, 0.06);
}

.fresh-row:last-child {
    margin-bottom: 0;
}

.fresh-info {
    flex: 1;
}

.fresh-info h3 {
    font-size: 14px;
    line-height: 22px;
    font-weight: 700;
    letter-spacing: -0.2px;
}

.fresh-info p {
    margin-top: 2px;
    display: flex;
    align-items: center;
    gap: 4px;
    font-size: 12.5px;
    line-height: 20px;
    color: #5f6672;
}

.fresh-info .ic {
    width: 13px;
    height: 13px;
}

.fresh-badge {
    height: 34px;
    margin-right: 6px;
    display: flex;
    align-items: center;
    gap: 5px;
    padding: 0 11px;
    border: 1px solid transparent;
    border-radius: 17px;
    font-size: 12px;
    font-weight: 600;
}

.fresh-badge .ic {
    width: 13px;
    height: 13px;
}

.fresh-badge.live {
    background: #e9f3e6;
    color: #3f8f2f;
}

.fresh-badge.recent {
    background: #fff0dd;
    border-color: #fbdcb2;
    color: #c77a12;
}

.fresh-badge.stale {
    background: #fdeaea;
    color: #c0392b;
}

.square-btn {
    width: 33px;
    height: 34px;
    display: flex;
    align-items: center;
    justify-content: center;
    padding: 0;
    border: 1px solid #e0e3e8;
    border-radius: 10px;
    background: #f7f8fa;
    color: #4b5563;
}

/* sync log */
.sync-log {
    padding: 43px 25px 41px;
    background: #f0f4f9;
    border-bottom: 1px solid #e0e3e8;
}

.log-card {
    height: 629px;
    border-radius: 16px;
    background: #fff;
    box-shadow: 0 6px 16px rgba(60, 90, 120, 0.08);
    overflow: hidden;
    font-family: "Liberation Sans", sans-serif;
}

.log-head {
    height: 85px;
    display: flex;
    align-items: flex-start;
    padding: 19px 24px 0;
    border-bottom: 2px solid #eef0f3;
}

.log-icon {
    width: 38px;
    height: 38px;
    border-radius: 12px;
    background: linear-gradient(135deg, #f19a3e, #74b9c6);
    color: #fff;
    display: flex;
    align-items: center;
    justify-content: center;
    box-shadow: 0 6px 12px rgba(59, 130, 246, 0.16);
    flex: none;
}

.log-icon .ic {
    width: 19px;
    height: 19px;
}

.log-title {
    margin-left: 12px;
    flex: 1;
}

.log-title h2 {
    font-size: 20px;
    line-height: 24px;
    font-weight: 700;
}

.log-title p {
    margin-top: 2px;
    font-size: 13.5px;
    line-height: 20px;
    color: #5f6672;
}

.log-filters {
    display: flex;
    gap: 9px;
    margin-top: 8px;
}

.log-filters button {
    height: 30px;
    padding: 0 14px;
    border: 1px solid #e5e7eb;
    border-radius: 15px;
    background: #fff;
    font-family: inherit;
    font-size: 13.5px;
    color: #4b5563;
}

.log-filters button.active {
    border-color: #f19a3e;
    background: #eef5ff;
    color: #74b9c6;
}

.log-table {
    width: 100%;
    table-layout: fixed;
    border-collapse: collapse;
    font-size: 13.5px;
}

.log-table th:nth-child(1) {
    width: 64px;
}

.log-table th:nth-child(2) {
    width: 230px;
}

.log-table th:nth-child(3) {
    width: 291px;
}

.log-table th:nth-child(4) {
    width: 311px;
}

.log-table th:nth-child(5) {
    width: 137px;
}

.log-table th {
    height: 47px;
    padding: 0;
    background: #f8f9fb;
    border-bottom: 2px solid #eef0f3;
    text-align: left;
    font-size: 12px;
    font-weight: 700;
    color: #8a8f98;
    letter-spacing: 0.2px;
}

.log-table td {
    height: 53.4px;
    padding: 0;
    border-bottom: 2px solid #eef0f3;
    color: #2b313b;
}

.log-table td.muted {
    color: #4b5563;
}

.exp {
    text-align: right;
    color: #8a8f98 !important;
}

.exp .ic {
    display: block;
    margin: 0 13px 0 auto;
    width: 14px;
    height: 14px;
    stroke-width: 1.6;
}

.src {
    width: 14px;
    height: 14px;
    margin-right: 6px;
    vertical-align: -2px;
    color: #74b9c6;
}

.st {
    display: inline-flex;
    align-items: center;
    gap: 5px;
    height: 26px;
    padding: 0 11px;
    border-radius: 11px;
    font-size: 12.5px;
    font-weight: 700;
}

.st .ic {
    width: 13px;
    height: 13px;
}

.st.ok {
    background: #e6f6ec;
    color: #16a34a;
}

.st.warn {
    background: #fdf1e5;
    color: #d97706;
}

.st.err {
    background: #fde6e8;
    color: #dc2626;
}

.row-error td:first-child {
    box-shadow: inset 3px 0 0 #dc2626;
}

.log-more {
    display: flex;
    justify-content: center;
    margin-top: 16px;
}

.log-more button {
    width: 276px;
    height: 35px;
    display: flex;
    align-items: center;
    justify-content: center;
    gap: 10px;
    border: 1px solid #e5e7eb;
    border-radius: 18px;
    background: #fff;
    font-family: inherit;
    font-size: 14px;
    font-weight: 700;
    color: #74b9c6;
}

.log-more .ic {
    width: 14px;
    height: 14px;
}

/* footer */
.footer {
    padding: 56px 40px 0;
    height: 375px;
    background: linear-gradient(180deg, #ffffff, #e2eff9);
}

.footer-grid {
    height: 247px;
    display: grid;
    grid-template-columns: 274px 177px 177px 177px 250px;
    gap: 36px;
    border-bottom: 1px solid #dfe2e7;
}

.footer-logo {
    display: flex;
    align-items: center;
    gap: 10px;
    font-size: 18px;
    font-weight: 700;
}

.footer-icon {
    width: 38px;
    height: 38px;
    border: 1px solid #fbdcb2;
    border-radius: 12px;
    background: #fff1e3;
    color: #ff9416;
    display: flex;
    align-items: center;
    justify-content: center;
}

.footer-icon .ic {
    width: 22px;
    height: 22px;
}

.footer-brand p {
    margin-top: 13px;
    font-size: 13.5px;
    line-height: 22px;
    color: #5f6b7a;
    letter-spacing: -0.25px;
}

.audit-badge {
    width: 274px;
    height: 44px;
    margin-top: 15px;
    display: flex;
    align-items: center;
    gap: 7px;
    padding-left: 14px;
    border: 1px solid #5fb8c6;
    border-radius: 10px;
    background: #f4fbfd;
    color: #0f766e;
    font-size: 12.5px;
    font-weight: 500;
    white-space: nowrap;
    letter-spacing: -0.2px;
}

.footer h4 {
    font-size: 14px;
    line-height: 22px;
    font-weight: 700;
    letter-spacing: 0.3px;
    color: #243040;
}

.footer-col h4 {
    max-width: 165px;
    margin-bottom: 18px;
    margin-top: -1px;
}

.footer-col a {
    display: block;
    height: 20px;
    margin-bottom: 13px;
    font-size: 13.5px;
    line-height: 20px;
    color: #5f6b7a;
    white-space: nowrap;
    letter-spacing: -0.2px;
}

.footer-updates h4 {
    margin-top: -1px;
}

.footer-updates p {
    margin-top: 16px;
    font-size: 13.5px;
    line-height: 22px;
    color: #5f6b7a;
    letter-spacing: -0.25px;
}

.email-box {
    height: 43px;
    margin-top: 13px;
    display: flex;
    align-items: center;
    gap: 8px;
    padding-left: 14px;
    border: 1px solid #dfe2e7;
    border-radius: 14px;
    background: #fff;
    font-size: 13.5px;
    color: #9ca3af;
}

.email-box .ic {
    color: #8a94a3;
}

.notify-btn {
    width: 100%;
    height: 44px;
    margin-top: 11px;
    border-radius: 14px;
    font-size: 14px;
}

.notify-btn .ic {
    width: 14px;
    height: 14px;
}

.footer-bottom {
    display: flex;
    justify-content: space-between;
    align-items: center;
    margin-top: 22px;
    font-size: 13px;
    line-height: 20px;
}

.copyright {
    color: #9ca3af;
    letter-spacing: -0.2px;
}

.footer-links {
    display: flex;
    gap: 11px;
    color: #5f6b7a;
}

.footer-links i {
    color: #c3c8d0;
    font-style: normal;
}
```
FILE: script.js
```js
// Activity trends chart, monotone curves over 30 days
const steps = [10045, 11181, 10097, 10304, 10060, 7847, 7294, 7014, 5339, 5981, 5303, 6829, 8548, 8622, 10171, 11351, 10245, 10429, 10171, 7921, 7420, 5376, 5524, 6136, 5487, 7014, 8806, 8806, 10370, 11513];
const active = [71.2, 74.2, 55.4, 51, 46, 29.1, 30.9, 39.1, 36.8, 53.3, 53.8, 68.1, 78.1, 66.8, 67, 62.3, 42.3, 38, 38.4, 28, 38, 37.5, 53.8, 69.3, 66.8, 73.9, 76.5, 58.6, 52.8, 48.1];
const sleep = [85.8, 84.1, 72.8, 72, 71.6, 61.8, 64.7, 68.9, 66.8, 74.2, 73.9, 81.8, 90, 87, 91.8, 95.5, 86, 85, 84.4, 72.8, 71.2, 61.8, 63.3, 67.2, 63, 70.2, 78.1, 77.8, 86, 92.6];

const plotLeft = 24, plotRight = 1110, plotTop = 13, plotBottom = 377;
const stepX = (plotRight - plotLeft) / 29;
const svg = document.getElementById('trend-chart');
const xAt = i => plotLeft + i * stepX;
const ySteps = v => plotBottom - (v - 5000) / 7000 * (plotBottom - plotTop);
const yPct = v => plotBottom - v / 100 * (plotBottom - plotTop);

function add(tag, attrs, text) {
    const el = document.createElementNS('http://www.w3.org/2000/svg', tag);
    Object.keys(attrs).forEach(k => el.setAttribute(k, attrs[k]));
    if (text) el.textContent = text;
    svg.appendChild(el);
    return el;
}

function monotonePath(pts) {
    const s = [];
    for (let i = 0; i < pts.length - 1; i++) s.push((pts[i + 1] - pts[i]) / stepX);
    const t = pts.map((_, i) => {
        if (i === 0) return s[0];
        if (i === pts.length - 1) return s[i - 1];
        if (s[i - 1] * s[i] <= 0) return 0;
        const sign = s[i] > 0 ? 1 : -1;
        return sign * Math.min(Math.abs(s[i - 1]), Math.abs(s[i]), Math.abs(s[i - 1] + s[i]) / 4) * 2;
    });
    const h = stepX / 3;
    let d = 'M' + xAt(0) + ' ' + pts[0];
    for (let i = 0; i < pts.length - 1; i++) {
        d += ' C' + (xAt(i) + h) + ' ' + (pts[i] + t[i] * h) + ' ' + (xAt(i + 1) - h) + ' ' + (pts[i + 1] - t[i + 1] * h) + ' ' + xAt(i + 1) + ' ' + pts[i + 1];
    }
    return d;
}

// grid and left axis
for (let i = 0; i <= 7; i++) {
    const y = plotTop + i * (plotBottom - plotTop) / 7;
    add('line', { x1: plotLeft, x2: plotRight, y1: y, y2: y, stroke: '#e3e6eb', 'stroke-width': 1 });
    add('text', { x: plotLeft - 4, y: y + 4, 'text-anchor': 'end' }, (12 - i) + 'k');
}

// right axis
for (let i = 0; i <= 10; i++) {
    add('text', { x: plotRight + 11, y: yPct(i * 10) + 4 }, String(i * 10));
}

// x axis
const labels = ['Jul 23', 'Jul 26', 'Jul 29', 'Aug 1', 'Aug 4', 'Aug 7', 'Aug 10', 'Aug 13', 'Aug 16', 'Aug 19'];
labels.forEach((l, i) => {
    add('text', { x: xAt(i * 3) - 1, y: 398, 'text-anchor': 'middle' }, l);
});

const stepPts = steps.map(ySteps);
add('path', { d: monotonePath(stepPts) + ' L' + plotRight + ' ' + plotBottom + ' L' + plotLeft + ' ' + plotBottom + ' Z', fill: 'rgba(59,130,246,0.16)' });
add('line', { x1: plotLeft, x2: plotRight, y1: plotBottom, y2: plotBottom, stroke: '#c9d3e2', 'stroke-width': 1 });

[[stepPts, '#3b82f6'], [active.map(yPct), '#0ea5e9'], [sleep.map(yPct), '#2dd4bf']].forEach(([pts, color]) => {
    add('path', { d: monotonePath(pts), fill: 'none', stroke: color, 'stroke-width': 2.2 });
    pts.forEach((y, i) => add('circle', { cx: xAt(i), cy: y, r: 2, fill: '#fff', stroke: color, 'stroke-width': 0.5 }));
});
```
